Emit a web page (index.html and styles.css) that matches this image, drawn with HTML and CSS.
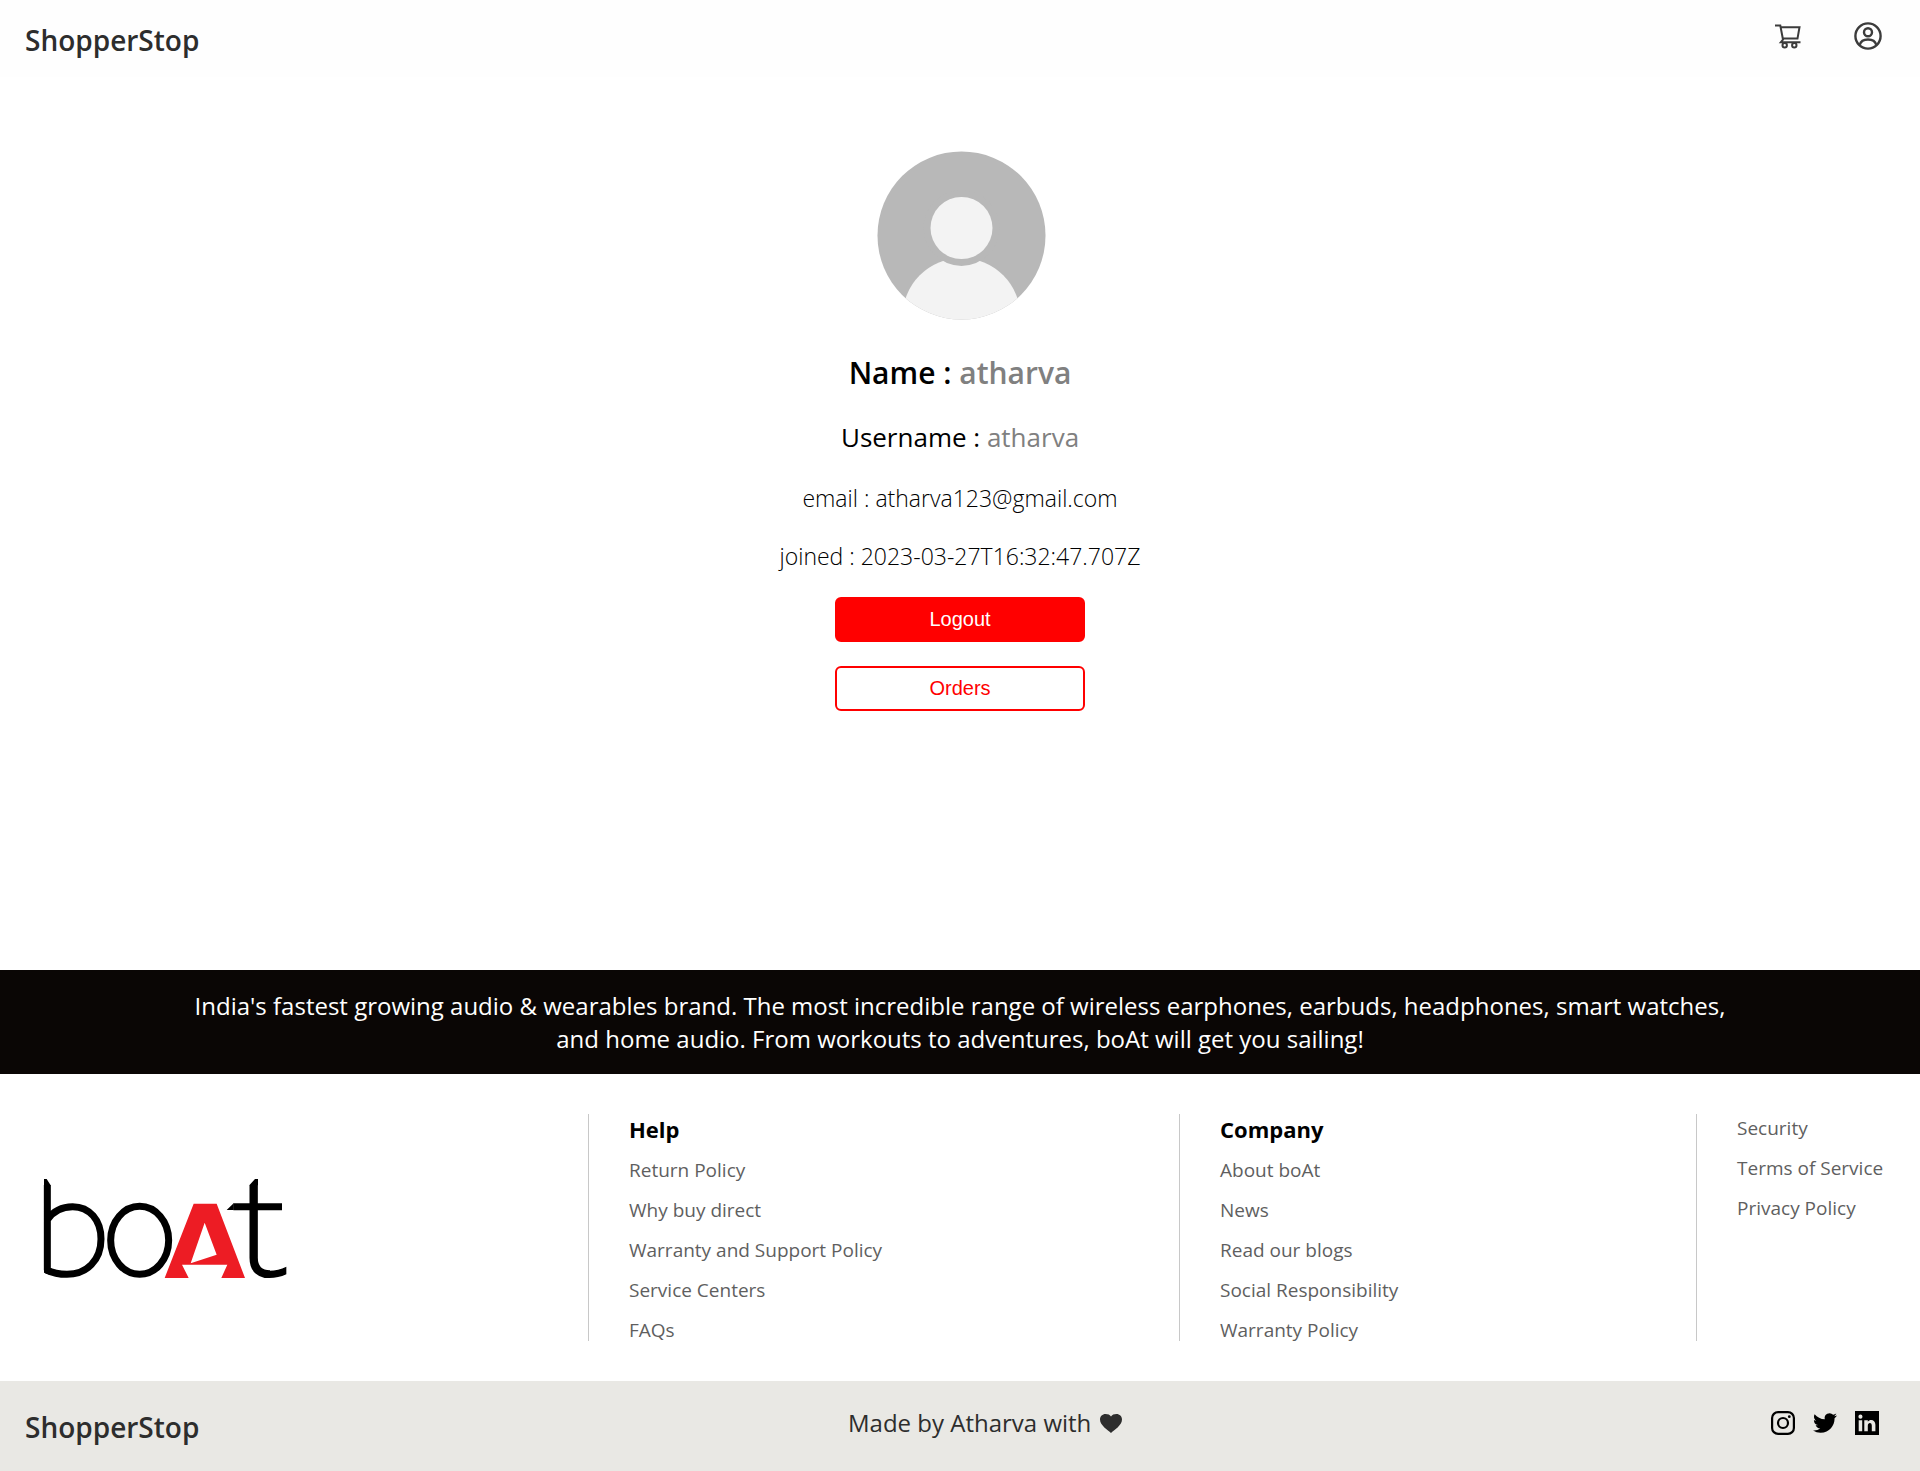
FILE: index.html
```html
<!DOCTYPE html>
<html lang="en">
<head>
  <meta charset="utf-8">
  <meta name="viewport" content="width=device-width, initial-scale=1">
  <title>ShopperStop</title>
  <link rel="stylesheet" href="styles.css">
</head>
<body>
  <header class="topbar">
    <a class="brand" href="#">ShopperStop</a>
    <nav class="topbar-actions" aria-label="Account">
      <a href="#" aria-label="Cart">
        <svg class="icon-cart" viewBox="0 0 28 28" fill="none" stroke="#3c3c3c" stroke-width="2">
          <path d="M1 3.500H6.300L9 17.500L6.800 20.300H26.500M6.800 5.200H25.500L23.500 16.600H9"/>
          <circle cx="10.700" cy="23.300" r="2.200"/>
          <circle cx="20.300" cy="23.300" r="2.200"/>
        </svg>
      </a>
      <a href="#" aria-label="Profile">
        <svg class="icon-user" viewBox="0 0 28 28" fill="none" stroke="#3c3c3c" stroke-width="2.400">
          <circle cx="14" cy="14" r="12.600"/>
          <circle cx="14" cy="10.300" r="4"/>
          <path d="M5.800 22.800C7.600 15.700 20.400 15.700 22.200 22.800"/>
        </svg>
      </a>
    </nav>
  </header>

  <main class="profile">
    <svg class="avatar" viewBox="0 0 188 188" role="img" aria-label="Profile picture">
      <defs><clipPath id="face"><circle cx="95.500" cy="94.500" r="84"/></clipPath></defs>
      <circle cx="95.500" cy="94.500" r="84" fill="#b8b8b8"/>
      <g clip-path="url(#face)">
        <circle cx="95.500" cy="176" r="59" fill="#f3f3f3"/>
        <circle cx="95.500" cy="87" r="38" fill="#b8b8b8"/>
        <circle cx="95.500" cy="87" r="31" fill="#f3f3f3"/>
      </g>
    </svg>
    <h1 class="name">Name : <span class="muted">atharva</span></h1>
    <p class="username">Username : <span class="muted">atharva</span></p>
    <p class="detail">email : atharva123@gmail.com</p>
    <p class="detail">joined : 2023-03-27T16:32:47.707Z</p>
    <button class="btn btn-solid" type="button">Logout</button>
    <button class="btn btn-outline" type="button">Orders</button>
  </main>

  <footer>
    <p class="banner">India's fastest growing audio &amp; wearables brand. The most incredible range of wireless earphones, earbuds, headphones, smart watches, and home audio. From workouts to adventures, boAt will get you sailing!</p>

    <div class="links">
      <div class="logo-cell">
        <svg class="logo" viewBox="60 81 750 300" role="img" aria-label="boAt">
          <g fill="none" stroke="#000" stroke-width="21">
            <path d="M82 102V358M82 206C100 180 127 167 158 167C209 167 243 208 243 264C243 328 200 370 141 370C118 370 98 366 80 357"/>
            <ellipse cx="359" cy="268" rx="87" ry="102"/>
            <path stroke-width="25" d="M701 102V320C701 356 722 370 750 370"/>
            <path d="M640 167H786"/>
          </g>
          <path d="M72 84H80L92 103H72ZM72 350V365L90 372V350ZM705 84H714V103H688ZM641 157V177H620ZM748 359C766 359 783 355 799 347V370C783 378 766 381 748 381Z"/>
          <path fill="#ed1c24" fill-rule="evenodd" d="M521 158H590L675 381H604L622 341H486L506 381H434ZM554 215L590 311L512 337Z"/>
        </svg>
      </div>
      <nav class="column" aria-labelledby="help">
        <h2 id="help">Help</h2>
        <ul>
          <li><a href="#">Return Policy</a></li>
          <li><a href="#">Why buy direct</a></li>
          <li><a href="#">Warranty and Support Policy</a></li>
          <li><a href="#">Service Centers</a></li>
          <li><a href="#">FAQs</a></li>
        </ul>
      </nav>
      <nav class="column" aria-labelledby="company">
        <h2 id="company">Company</h2>
        <ul>
          <li><a href="#">About boAt</a></li>
          <li><a href="#">News</a></li>
          <li><a href="#">Read our blogs</a></li>
          <li><a href="#">Social Responsibility</a></li>
          <li><a href="#">Warranty Policy</a></li>
        </ul>
      </nav>
      <nav class="column column-plain" aria-label="Legal">
        <ul>
          <li><a href="#">Security</a></li>
          <li><a href="#">Terms of Service</a></li>
          <li><a href="#">Privacy Policy</a></li>
        </ul>
      </nav>
    </div>

    <div class="bottombar">
      <a class="brand" href="#">ShopperStop</a>
      <p class="credit">Made by Atharva with
        <svg class="heart" viewBox="0 0 22 19" fill="#2d2d2d" aria-label="love"><path d="M11 19C8 16 0 11.500 0 5.500C0 2.300 2.500 0 5.500 0C8 0 10 .800 11 2.600C12 .800 14 0 16.500 0C19.500 0 22 2.300 22 5.500C22 11.500 14 16 11 19Z"/></svg>
      </p>
      <nav class="social" aria-label="Social media">
        <a href="#" aria-label="Instagram">
          <svg viewBox="0 0 24 24" fill="none" stroke="#000" stroke-width="2.200">
            <rect x="1.100" y="1.100" width="21.800" height="21.800" rx="6"/>
            <circle cx="12" cy="12" r="5"/>
            <circle cx="18.300" cy="5.700" r="1.400" fill="#000" stroke="none"/>
          </svg>
        </a>
        <a href="#" aria-label="Twitter">
          <svg viewBox="0 0 24 24"><path d="M23.953 4.570a10 10 0 0 1-2.825.775 4.958 4.958 0 0 0 2.163-2.723c-.951.555-2.005.959-3.127 1.184a4.920 4.920 0 0 0-8.384 4.482C7.690 8.095 4.067 6.130 1.640 3.162a4.822 4.822 0 0 0-.666 2.475c0 1.710.870 3.213 2.188 4.096a4.904 4.904 0 0 1-2.228-.616v.060a4.923 4.923 0 0 0 3.946 4.827 4.996 4.996 0 0 1-2.212.085 4.936 4.936 0 0 0 4.604 3.417 9.867 9.867 0 0 1-6.102 2.105c-.390 0-.779-.023-1.170-.067a13.995 13.995 0 0 0 7.557 2.209c9.053 0 13.998-7.496 13.998-13.985 0-.210 0-.420-.015-.630A9.935 9.935 0 0 0 24 4.590z"/></svg>
        </a>
        <a href="#" aria-label="LinkedIn">
          <svg viewBox="0 0 24 24"><path fill-rule="evenodd" d="M0 0H24V24H0ZM3.700 9.200V20.300H7.200V9.200ZM5.450 3.600A2 2 0 1 0 5.450 7.700A2 2 0 1 0 5.450 3.600ZM9.300 9.200V20.300H12.800V14.800C12.800 11.200 16.800 11.200 16.800 14.500V20.300H20.400V13.800C20.400 8.300 14.800 7.800 12.800 10.700V9.200Z"/></svg>
        </a>
      </nav>
    </div>
  </footer>
</body>
</html>
```
FILE: styles.css
```css
* {
  box-sizing: border-box;
  margin: 0;
  padding: 0;
}

body {
  display: flex;
  flex-direction: column;
  min-height: 100vh;
  background: #fff;
  color: #000;
  font-family: "Segoe UI", "Open Sans", "Noto Sans", sans-serif;
}

a {
  color: inherit;
  text-decoration: none;
}

ul {
  list-style: none;
}

svg {
  display: block;
}

.topbar,
.bottombar {
  display: flex;
  align-items: center;
  justify-content: space-between;
}

.topbar {
  padding: 16px 38px 21px 25px;
  background: #fefefe;
}

.brand {
  padding-top: 8px;
  color: #2d2d2d;
  font-size: 28px;
  font-weight: 600;
  line-height: 32px;
}

.topbar-actions {
  display: flex;
  align-items: center;
  gap: 52px;
}

.icon-cart,
.icon-user {
  width: 28px;
  height: 28px;
}

.profile {
  display: flex;
  flex: 1;
  flex-direction: column;
  align-items: center;
  gap: 24px;
  padding: 64px 24px;
}

.avatar {
  width: 188px;
  height: 188px;
}

.muted {
  color: #808080;
}

.name {
  font-size: 30px;
  font-weight: 600;
  line-height: 40px;
}

.username {
  font-size: 26px;
  line-height: 40px;
}

.detail {
  font-size: 23px;
  font-weight: 300;
  line-height: 34px;
}

.btn {
  width: 250px;
  height: 45px;
  border: 2px solid #f00;
  border-radius: 6px;
  font-family: "Liberation Sans", Arial, sans-serif;
  font-size: 20px;
  cursor: pointer;
}

.btn-solid {
  background: #f00;
  color: #fff;
}

.btn-outline {
  background: #fff;
  color: #f00;
}

.banner {
  padding: 19px 10%;
  background: #0a0605;
  color: #fff;
  font-size: 24px;
  line-height: 33px;
  text-align: center;
}

.links {
  display: grid;
  grid-template-columns: 588fr 591fr 517fr 224fr;
  padding: 40px 0;
}

.logo-cell {
  display: flex;
  align-items: center;
  padding: 0 40px;
}

.logo {
  width: 250px;
  height: 100px;
}

.column {
  padding: 0 0 1px 40px;
  border-left: 1px solid #c8c8c8;
  white-space: nowrap;
}

.column h2 {
  margin-bottom: 16px;
  font-size: 22px;
  font-weight: 700;
  line-height: 30px;
}

.column ul {
  display: flex;
  flex-direction: column;
  gap: 20px;
  color: #5f5f5f;
  font-size: 19px;
  line-height: 20px;
}

.column-plain {
  padding-top: 4px;
}

.bottombar {
  padding: 22px 41px 28px 25px;
  background: #e9e8e4;
}

.credit {
  display: flex;
  align-items: center;
  gap: 9px;
  color: #2d2d2d;
  font-size: 24px;
  line-height: 32px;
}

.heart {
  width: 22px;
  height: 19px;
}

.social {
  display: flex;
  align-items: center;
  gap: 18px;
}

.social svg {
  width: 24px;
  height: 24px;
}
```
